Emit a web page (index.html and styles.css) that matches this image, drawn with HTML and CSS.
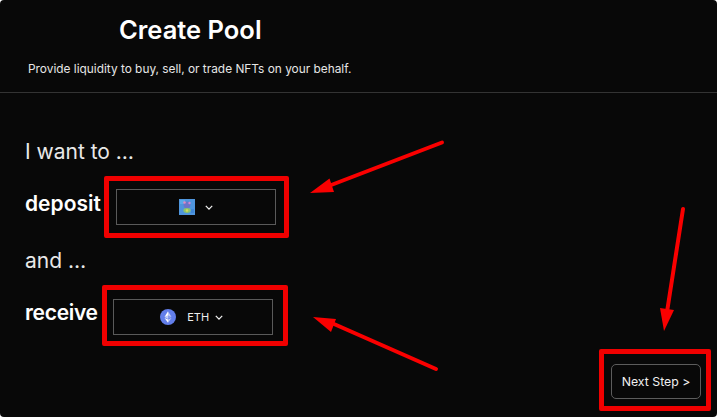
FILE: index.html
```html
<!DOCTYPE html>
<html lang="en">
<head>
<meta charset="utf-8">
<title>Create Pool</title>
<link rel="stylesheet" href="styles.css">
</head>
<body>
<main class="page">
  <header class="head">
    <h1 class="title">Create Pool</h1>
    <p class="sub">Provide liquidity to buy, sell, or trade NFTs on your behalf.</p>
  </header>
  <section class="form">
    <p class="lead">I want to …</p>
    <div class="row row-deposit">
      <span class="label">deposit</span>
      <button class="select select-deposit" type="button">
        <svg class="nft" viewBox="0 0 16 16" width="16" height="16" aria-hidden="true">
          <rect width="16" height="16" fill="#4f95dd"/>
          <rect x="1" y="1" width="5" height="4" fill="#5aa9e8"/>
          <circle cx="8" cy="6" r="3.4" fill="#6d74c9"/>
          <circle cx="5.500" cy="3.500" r="1.300" fill="#e08ac0"/>
          <circle cx="10.500" cy="4" r="1.200" fill="#d08ad8"/>
          <ellipse cx="8" cy="11.500" rx="3.600" ry="2.400" fill="#8dc46a"/>
          <circle cx="8" cy="11.500" r="1.200" fill="#d6dc5a"/>
          <rect x="12" y="10" width="3" height="4" fill="#3f86d6"/>
        </svg>
        <svg class="chev" viewBox="0 0 10 6" width="8" height="5" aria-hidden="true"><path d="M1 1l4 4 4-4" fill="none" stroke="#f0f0f0" stroke-width="1.6"/></svg>
      </button>
    </div>
    <p class="lead lead-and">and …</p>
    <div class="row row-receive">
      <span class="label">receive</span>
      <button class="select select-receive" type="button">
        <svg class="eth" viewBox="0 0 16 16" width="16" height="16" aria-hidden="true">
          <circle cx="8" cy="8" r="8" fill="#627eea"/>
          <path d="M8 2.200v4.300l3.500 1.600z" fill="#fff" fill-opacity=".6"/>
          <path d="M8 2.200L4.500 8.100 8 6.500z" fill="#fff"/>
          <path d="M8 10.600v3.200l3.500-4.900z" fill="#fff" fill-opacity=".6"/>
          <path d="M8 10.600V13.800L4.500 8.900z" fill="#fff"/>
          <path d="M8 9.900l3.500-1.800L8 6.500z" fill="#fff" fill-opacity=".25"/>
          <path d="M4.500 8.100L8 9.900V6.500z" fill="#fff" fill-opacity=".6"/>
        </svg>
        <span class="sym">ETH</span>
        <svg class="chev" viewBox="0 0 10 6" width="8" height="5" aria-hidden="true"><path d="M1 1l4 4 4-4" fill="none" stroke="#f0f0f0" stroke-width="1.6"/></svg>
      </button>
    </div>
  </section>
  <footer class="foot">
    <button class="next" type="button">Next Step &gt;</button>
  </footer>

  <div class="mark mark-deposit"></div>
  <div class="mark mark-receive"></div>
  <div class="mark mark-next"></div>
  <svg class="arrows" viewBox="0 0 717 417" width="717" height="417" aria-hidden="true">
    <g stroke="#fa0000" stroke-width="4" stroke-linecap="round" fill="#fa0000">
      <path d="M442 142.500L326 187" fill="none"/>
      <path d="M436 369L334 324" fill="none"/>
      <path d="M683 209L667 312" fill="none"/>
    </g>
    <g fill="#fa0000">
      <path d="M310 193L329.500 178.500L334 192z"/>
      <path d="M313 317L336 319L331 332z"/>
      <path d="M664 331L660 308L674 310z"/>
    </g>
  </svg>
</main>
</body>
</html>
```
FILE: styles.css
```css
* { box-sizing: border-box; }
html, body { margin: 0; padding: 0; background: #fff; }
body {
  width: 717px;
  height: 417px;
  overflow: hidden;
  font-family: "Inter", "Liberation Sans", sans-serif;
  color: #f4f4f4;
}
.page {
  position: relative;
  width: 717px;
  height: 417px;
  display: flex;
  flex-direction: column;
  background: #080808;
  border-radius: 4px;
  overflow: hidden;
}
.head {
  height: 93px;
  padding: 15px 0 0 28px;
  border-bottom: 1px solid #333;
}
.title {
  margin: 0 0 0 91px;
  font-size: 25.500px;
  line-height: 30px;
  font-weight: 600;
  color: #fff;
}
.sub {
  margin: 16px 0 0;
  font-size: 11.870px;
  line-height: 16px;
  color: #e6e6e6;
}
.form {
  padding: 45px 0 0 25px;
  flex: 1;
}
.lead {
  margin: 0;
  font-size: 21px;
  line-height: 28px;
  font-weight: 400;
  color: #e8e8e8;
}
.row {
  display: flex;
  align-items: center;
}
.row-deposit { margin-top: 23px; gap: 15px; }
.row-receive { margin-top: 24px; gap: 15px; }
.lead-and { margin-top: 22px; }
.label {
  font-size: 21px;
  line-height: 28px;
  font-weight: 600;
  color: #fff;
}
.row-deposit .label { margin-bottom: 6px; }
.row-receive .label { margin-bottom: 8px; letter-spacing: -0.3px; }
.select {
  display: flex;
  align-items: center;
  justify-content: center;
  width: 160px;
  height: 36px;
  background: transparent;
  border: 1px solid #5a5a5a;
  font: inherit;
  color: #eee;
  padding: 0;
}
.select-deposit { gap: 10px; }
.select-receive { gap: 0; padding-right: 2px; }
.eth { margin-right: 11px; }
.sym { font-size: 11px; margin-right: 6px; }
.foot {
  position: absolute;
  left: 611px;
  top: 364px;
}
.next {
  width: 90px;
  height: 35px;
  background: transparent;
  border: 1px solid #5c5c5c;
  border-radius: 5px;
  color: #f0f0f0;
  font: inherit;
  font-size: 12.300px;
  padding: 0;
}
.mark {
  position: absolute;
  border: 5px solid #f00000;
  border-radius: 2px;
}
.mark-deposit { left: 104px; top: 176px; width: 185px; height: 62px; }
.mark-receive { left: 102px; top: 285px; width: 186px; height: 61px; }
.mark-next { left: 599px; top: 349px; width: 112px; height: 62px; }
.arrows {
  position: absolute;
  left: 0;
  top: 0;
  pointer-events: none;
}
```
